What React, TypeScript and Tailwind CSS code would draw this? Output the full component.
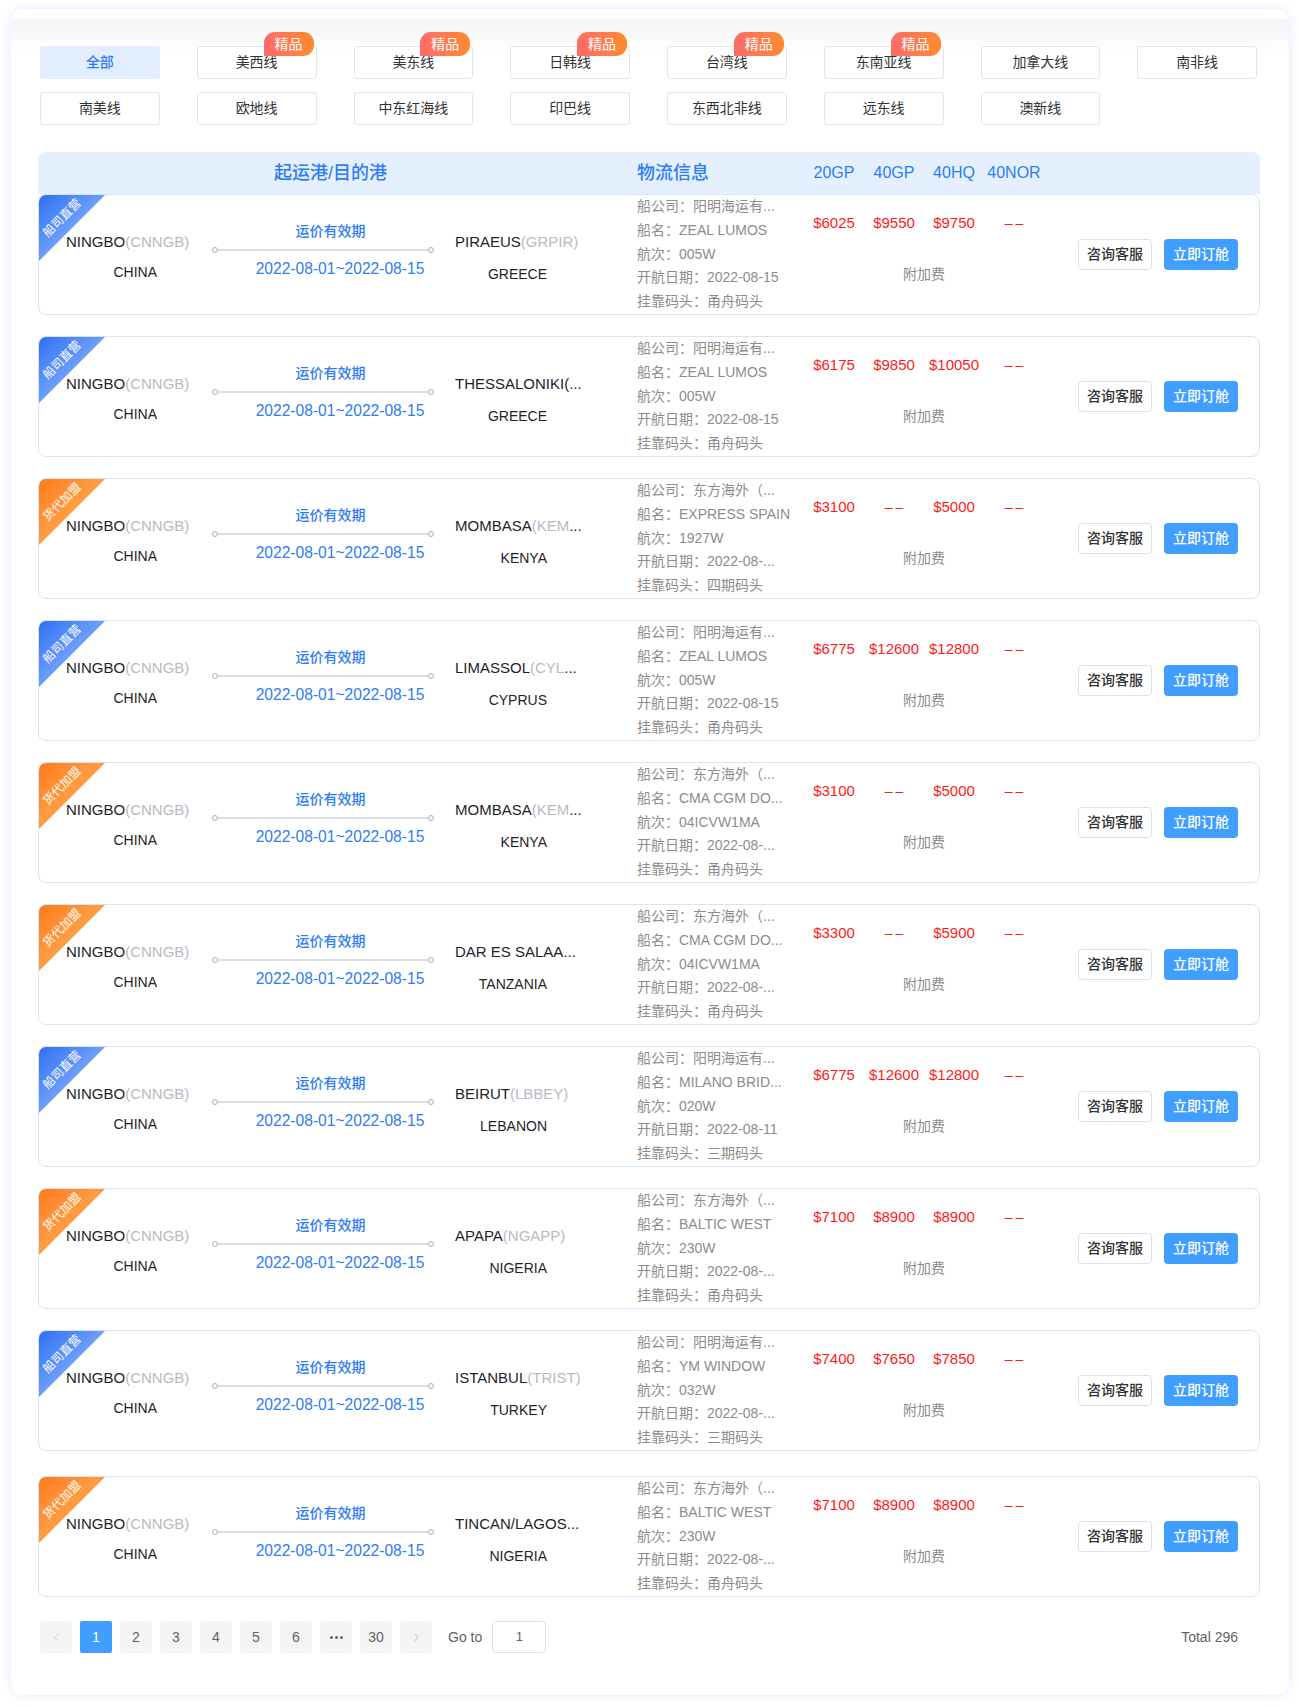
import { ChevronLeft, ChevronRight } from "lucide-react";

type Row = {
    tag: "ship" | "agent";
    port: string;
    code?: string;
    more?: boolean;
    country: string;
    info: string[];
    prices: string[];
};

const tabs = [
    { name: "全部", active: true },
    { name: "美西线", hot: true },
    { name: "美东线", hot: true },
    { name: "日韩线", hot: true },
    { name: "台湾线", hot: true },
    { name: "东南亚线", hot: true },
    { name: "加拿大线" },
    { name: "南非线" },
    { name: "南美线" },
    { name: "欧地线" },
    { name: "中东红海线" },
    { name: "印巴线" },
    { name: "东西北非线" },
    { name: "远东线" },
    { name: "澳新线" },
];

const ym = "船公司：阳明海运有...";
const oocl = "船公司：东方海外（...";
const none = "––";

const rows: Row[] = [
    {
        tag: "ship",
        port: "PIRAEUS",
        code: "(GRPIR)",
        country: "GREECE",
        info: [ym, "船名：ZEAL LUMOS", "航次：005W", "开航日期：2022-08-15", "挂靠码头：甬舟码头"],
        prices: ["$6025", "$9550", "$9750", none],
    },
    {
        tag: "ship",
        port: "THESSALONIKI(",
        more: true,
        country: "GREECE",
        info: [ym, "船名：ZEAL LUMOS", "航次：005W", "开航日期：2022-08-15", "挂靠码头：甬舟码头"],
        prices: ["$6175", "$9850", "$10050", none],
    },
    {
        tag: "agent",
        port: "MOMBASA",
        code: "(KEM",
        more: true,
        country: "KENYA",
        info: [oocl, "船名：EXPRESS SPAIN", "航次：1927W", "开航日期：2022-08-...", "挂靠码头：四期码头"],
        prices: ["$3100", none, "$5000", none],
    },
    {
        tag: "ship",
        port: "LIMASSOL",
        code: "(CYL",
        more: true,
        country: "CYPRUS",
        info: [ym, "船名：ZEAL LUMOS", "航次：005W", "开航日期：2022-08-15", "挂靠码头：甬舟码头"],
        prices: ["$6775", "$12600", "$12800", none],
    },
    {
        tag: "agent",
        port: "MOMBASA",
        code: "(KEM",
        more: true,
        country: "KENYA",
        info: [oocl, "船名：CMA CGM DO...", "航次：04ICVW1MA", "开航日期：2022-08-...", "挂靠码头：甬舟码头"],
        prices: ["$3100", none, "$5000", none],
    },
    {
        tag: "agent",
        port: "DAR ES SALAA",
        more: true,
        country: "TANZANIA",
        info: [oocl, "船名：CMA CGM DO...", "航次：04ICVW1MA", "开航日期：2022-08-...", "挂靠码头：甬舟码头"],
        prices: ["$3300", none, "$5900", none],
    },
    {
        tag: "ship",
        port: "BEIRUT",
        code: "(LBBEY)",
        country: "LEBANON",
        info: [ym, "船名：MILANO BRID...", "航次：020W", "开航日期：2022-08-11", "挂靠码头：三期码头"],
        prices: ["$6775", "$12600", "$12800", none],
    },
    {
        tag: "agent",
        port: "APAPA",
        code: "(NGAPP)",
        country: "NIGERIA",
        info: [oocl, "船名：BALTIC WEST", "航次：230W", "开航日期：2022-08-...", "挂靠码头：甬舟码头"],
        prices: ["$7100", "$8900", "$8900", none],
    },
    {
        tag: "ship",
        port: "ISTANBUL",
        code: "(TRIST)",
        country: "TURKEY",
        info: [ym, "船名：YM WINDOW", "航次：032W", "开航日期：2022-08-...", "挂靠码头：三期码头"],
        prices: ["$7400", "$7650", "$7850", none],
    },
    {
        tag: "agent",
        port: "TINCAN/LAGOS",
        more: true,
        country: "NIGERIA",
        info: [oocl, "船名：BALTIC WEST", "航次：230W", "开航日期：2022-08-...", "挂靠码头：甬舟码头"],
        prices: ["$7100", "$8900", "$8900", none],
    },
];

function Ribbon({ tag }: { tag: Row["tag"] }) {
    const ship = tag === "ship";
    return (
        <div
            className={
                "absolute left-0 top-0 h-[66px] w-[66px] [clip-path:polygon(0_0,100%_0,0_100%)] " +
                (ship ? "bg-linear-to-br from-[#2f6ef4] to-[#a9cbfb]" : "bg-linear-to-br from-[#ff7a12] to-[#ffbf66]")
            }
        >
            <span className="absolute left-[23px] top-[23px] -translate-x-1/2 -translate-y-1/2 -rotate-45 whitespace-nowrap text-[12px] leading-none text-white">
                {ship ? "船司直营" : "货代加盟"}
            </span>
        </div>
    );
}

function Validity() {
    return (
        <div className="w-[249px] shrink-0 pt-[26px]">
            <div className="text-center text-[14px] font-medium leading-5 text-[#2f7cf6]">运价有效期</div>
            <div className="ml-[6px] mr-[21px] mt-[4px] flex h-[10px] items-center">
                <span className="h-[6px] w-[6px] shrink-0 rounded-full border border-[#a9adb5] bg-white" />
                <span className="h-[2px] flex-1 bg-[#dadde2]" />
                <span className="h-[6px] w-[6px] shrink-0 rounded-full border border-[#a9adb5] bg-white" />
            </div>
            <div className="mt-[4px] pl-[19px] text-center text-[15.6px] leading-5 text-[#2f7cf6]">2022-08-01~2022-08-15</div>
        </div>
    );
}

function RateRow({ row, className }: { row: Row; className?: string }) {
    return (
        <div className={"relative flex h-[121px] overflow-hidden rounded-[8px] border border-[#d3e4fb] bg-white " + (className ?? "")}>
            <Ribbon tag={row.tag} />
            <div className="w-[167px] shrink-0 pl-[27px] pt-[37px]">
                <div className="whitespace-nowrap text-[15px] leading-5 text-[#1f2329]">
                    NINGBO<span className="text-[#b6bac2]">(CNNGB)</span>
                </div>
                <div className="mt-[10px] w-[91px] text-right text-[14px] leading-5 text-[#1f2329]">CHINA</div>
            </div>
            <Validity />
            <div className="w-[182px] shrink-0 pt-[37px]">
                <div className="whitespace-nowrap text-[15px] leading-5 text-[#1f2329]">
                    {row.port}
                    {row.code && <span className="text-[#b6bac2]">{row.code}</span>}
                    {row.more && "..."}
                </div>
                <div className="mt-[12px] w-[92px] text-right text-[14px] leading-5 text-[#1f2329]">{row.country}</div>
            </div>
            <div className="w-[167px] shrink-0 text-[14px] leading-[23.8px] text-[#8c8c8c]">
                {row.info.map((line) => (
                    <div key={line} className="whitespace-nowrap">
                        {line}
                    </div>
                ))}
            </div>
            <div className="w-[240px] shrink-0 pt-[18px]">
                <div className="grid grid-cols-4 text-center text-[15px] leading-5 text-[#ff1a1a]">
                    {row.prices.map((p, i) =>
                        p === none ? (
                            <span key={i} className="pl-[3px] text-[14px] tracking-[3px]">
                                {p}
                            </span>
                        ) : (
                            <span key={i}>{p}</span>
                        )
                    )}
                </div>
                <div className="mt-[31px] text-center text-[14px] leading-5 text-[#8c8c8c]">附加费</div>
            </div>
            <div className="flex flex-1 items-center justify-end gap-[12px] pr-[21px]">
                <button className="h-[31px] w-[74px] rounded-[4px] border border-[#dcdfe6] bg-white text-[14px] font-medium text-[#333]">
                    咨询客服
                </button>
                <button className="h-[31px] w-[74px] rounded-[4px] bg-[#409eff] text-[14px] font-medium text-white">
                    立即订舱
                </button>
            </div>
        </div>
    );
}

function PageBtn({ children, active }: { children: React.ReactNode; active?: boolean }) {
    return (
        <div
            className={
                "flex h-[32px] w-[32px] items-center justify-center rounded-[2px] text-[14px] " +
                (active ? "bg-[#409eff] text-white" : "bg-[#f4f4f5] text-[#606266]")
            }
        >
            {children}
        </div>
    );
}

export default function App() {
    return (
        <div className="min-h-[1706px] bg-white px-[11px] pb-[11px] pt-[9px] font-['Liberation_Sans','Noto_Sans_CJK_SC',sans-serif]">
            <div className="rounded-[14px] bg-[linear-gradient(180deg,#ffffff_8px,#f3f4f6_12px,#ffffff_42px)] pb-[42px] pl-[27px] pr-[29px] pt-[37px] shadow-[0_0_12px_rgba(110,160,235,0.22)]">
                {/* route tabs */}
                <div className="grid grid-cols-8 gap-x-[37px] gap-y-[13px] pl-[2px] pr-[3px]">
                    {tabs.map((t) => (
                        <div
                            key={t.name}
                            className={
                                "relative flex h-[33px] items-center justify-center rounded-[3px] text-[14px] " +
                                (t.active
                                    ? "bg-[#e2eefe] font-medium text-[#2f7cf6]"
                                    : "border border-[#e3e5ea] bg-white text-[#333]")
                            }
                        >
                            {t.name}
                            {t.hot && (
                                <span className="absolute -top-[15px] right-[2px] flex h-[24px] w-[50px] items-center justify-center rounded-t-[11px] rounded-br-[11px] bg-linear-to-r from-[#ff6a66] to-[#ff8a2a] pt-[1px] text-[14px] text-white">
                                    精品
                                </span>
                            )}
                        </div>
                    ))}
                </div>

                {/* table header */}
                <div className="mt-[27px] flex h-[42px] items-center rounded-t-[8px] bg-[#e5f0fe] text-[#2d7cf6]">
                    <div className="w-[168px] shrink-0" />
                    <div className="w-[249px] shrink-0 text-center text-[18px] font-medium">起运港/目的港</div>
                    <div className="w-[182px] shrink-0" />
                    <div className="w-[167px] shrink-0 text-[18px] font-medium">物流信息</div>
                    <div className="grid w-[240px] shrink-0 grid-cols-4 text-center text-[16px]">
                        <span>20GP</span>
                        <span>40GP</span>
                        <span>40HQ</span>
                        <span>40NOR</span>
                    </div>
                </div>

                {/* rows */}
                <div>
                    {rows.map((r, i) => (
                        <RateRow key={i} row={r} className={i === 0 ? "" : i === rows.length - 1 ? "mt-[25px]" : "mt-[21px]"} />
                    ))}
                </div>

                {/* pagination */}
                <div className="mt-[24px] flex items-center pl-[2px] pr-[22px] text-[14px] text-[#606266]">
                    <div className="flex items-center gap-[8px]">
                        <PageBtn>
                            <ChevronLeft size={13} strokeWidth={1.5} className="text-[#c0c4cc]" />
                        </PageBtn>
                        <PageBtn active>1</PageBtn>
                        <PageBtn>2</PageBtn>
                        <PageBtn>3</PageBtn>
                        <PageBtn>4</PageBtn>
                        <PageBtn>5</PageBtn>
                        <PageBtn>6</PageBtn>
                        <PageBtn>
                            <span className="flex gap-[2px]">
                                <span className="h-[3px] w-[3px] rounded-full bg-[#606266]" />
                                <span className="h-[3px] w-[3px] rounded-full bg-[#606266]" />
                                <span className="h-[3px] w-[3px] rounded-full bg-[#606266]" />
                            </span>
                        </PageBtn>
                        <PageBtn>30</PageBtn>
                        <PageBtn>
                            <ChevronRight size={13} strokeWidth={1.5} className="text-[#a8abb2]" />
                        </PageBtn>
                    </div>
                    <span className="ml-[16px]">Go to</span>
                    <div className="ml-[10px] flex h-[32px] w-[54px] items-center justify-center rounded-[4px] border border-[#dcdfe6] text-[13px]">
                        1
                    </div>
                    <span className="ml-auto">Total 296</span>
                </div>
            </div>
        </div>
    );
}
